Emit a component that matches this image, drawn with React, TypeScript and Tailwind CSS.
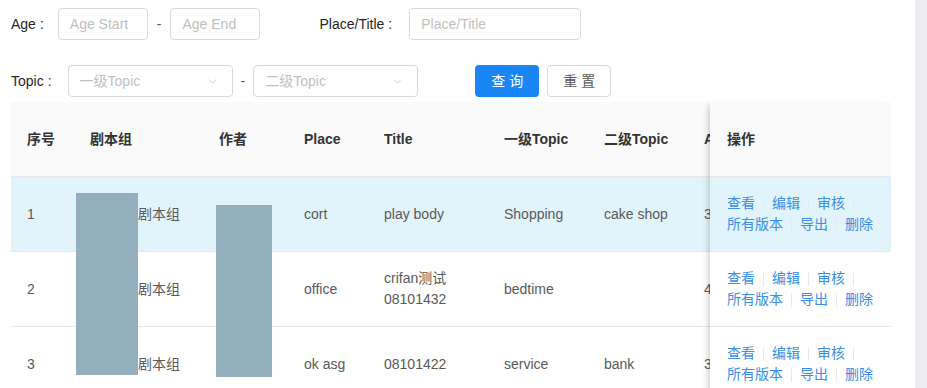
import { ChevronDown } from "lucide-react";

const FONT = { fontFamily: '"Liberation Sans", "Noto Sans CJK SC", sans-serif' };

const cols = [
  { key: "idx", title: "序号", w: "w-[63px]" },
  { key: "group", title: "剧本组", w: "w-[129px]" },
  { key: "author", title: "作者", w: "w-[85px]" },
  { key: "place", title: "Place", w: "w-[80px]" },
  { key: "title", title: "Title", w: "w-[120px]" },
  { key: "t1", title: "一级Topic", w: "w-[100px]" },
  { key: "t2", title: "二级Topic", w: "w-[100px]" },
  { key: "age", title: "Age", w: "w-[100px]" },
];

type Row = { idx: string; group: string; author: string; place: string; title: string[]; t1: string; t2: string; age: string };

const rows: Row[] = [
  { idx: "1", group: "剧本组", author: "", place: "cort", title: ["play body"], t1: "Shopping", t2: "cake shop", age: "3" },
  { idx: "2", group: "剧本组", author: "", place: "office", title: ["crifan测试", "08101432"], t1: "bedtime", t2: "", age: "4" },
  { idx: "3", group: "剧本组", author: "", place: "ok asg", title: ["08101422"], t1: "service", t2: "bank", age: "3" },
];

function Divider() {
  return <span className="mx-[8px] inline-block h-[13px] w-px bg-[#e8e8e8] align-middle" />;
}

function Label({ text }: { text: string }) {
  return (
    <span className="text-[14px] text-[#262626]">
      {text}
      <span className="ml-[4px]">:</span>
    </span>
  );
}

function Input({ placeholder, w }: { placeholder: string; w: string }) {
  return (
    <div className={`${w} flex h-[32px] items-center rounded-[4px] border border-[#d9d9d9] bg-white px-[11px] text-[14px] text-[#bfbfbf]`}>
      {placeholder}
    </div>
  );
}

function Select({ placeholder }: { placeholder: string }) {
  return (
    <div className="flex h-[32px] w-[165px] items-center justify-between rounded-[4px] border border-[#d9d9d9] bg-white pl-[11px] pr-[13px] text-[14px] text-[#bfbfbf]">
      <span>{placeholder}</span>
      <ChevronDown size={13} strokeWidth={1.5} className="text-[#bfbfbf]" />
    </div>
  );
}

function Actions() {
  return (
    <div className="text-[14px] leading-[21px] text-[#3a8ee6]">
      <div>
        查看<Divider />编辑<Divider />审核<Divider />
      </div>
      <div>
        所有版本<Divider />导出<Divider />删除
      </div>
    </div>
  );
}

export default function App() {
  return (
    <div className="relative flex min-h-[388px] bg-white" style={FONT}>
      <div className="flex-1 pl-[11px]">
        {/* search form */}
        <div className="mt-[8px] flex h-[32px] items-center">
          <Label text="Age" />
          <div className="ml-[14px]"><Input placeholder="Age Start" w="w-[90px]" /></div>
          <span className="mx-[9px] text-[14px] text-[#595959]">-</span>
          <Input placeholder="Age End" w="w-[90px]" />
          <div className="ml-[59px]"><Label text="Place/Title" /></div>
          <div className="ml-[17px]"><Input placeholder="Place/Title" w="w-[172px]" /></div>
        </div>
        <div className="mt-[25px] flex h-[32px] items-center">
          <Label text="Topic" />
          <div className="ml-[16px]"><Select placeholder="一级Topic" /></div>
          <span className="mx-[8px] text-[14px] text-[#595959]">-</span>
          <Select placeholder="二级Topic" />
          <button className="ml-[57px] h-[32px] w-[64px] rounded-[4px] bg-[#1a86f5] text-[14px] text-white">查 询</button>
          <button className="ml-[8px] h-[32px] w-[64px] rounded-[4px] border border-[#d9d9d9] bg-white text-[14px] text-[#595959]">重 置</button>
        </div>

        {/* table */}
        <div className="relative mt-[5px] flex w-[880px] text-[14px]">
          <div className="w-[699px] overflow-hidden">
            <div className="w-[900px]">
              <div className="flex h-[75px] items-center border-b border-[#e8e8e8] bg-[#fafafa] font-bold text-[#333]">
                {cols.map((c) => (
                  <div key={c.key} className={`${c.w} shrink-0 px-[16px]`}>{c.title}</div>
                ))}
              </div>
              {rows.map((r, i) => (
                <div
                  key={r.idx}
                  className={`flex h-[75px] items-center border-b text-[#595959] ${i === 0 ? "border-[#d5ebf5] bg-[#e1f4fc]" : "border-[#e8e8e8] bg-white"}`}
                >
                  <div className="w-[63px] shrink-0 px-[16px]">{r.idx}</div>
                  <div className="w-[129px] shrink-0 pl-[64px]">{r.group}</div>
                  <div className="w-[85px] shrink-0 px-[16px]">{r.author}</div>
                  <div className="w-[80px] shrink-0 px-[16px]">{r.place}</div>
                  <div className="w-[120px] shrink-0 px-[16px] leading-[21px]">
                    {r.title.map((t) => <div key={t}>{t}</div>)}
                  </div>
                  <div className="w-[100px] shrink-0 px-[16px]">{r.t1}</div>
                  <div className="w-[100px] shrink-0 px-[16px]">{r.t2}</div>
                  <div className="w-[100px] shrink-0 px-[16px]">{r.age}</div>
                </div>
              ))}
            </div>
          </div>
          {/* fixed right column */}
          <div className="relative z-10 w-[181px] shadow-[-5px_0_6px_-3px_rgba(0,0,0,0.18)]">
            <div className="flex h-[75px] items-center border-b border-[#e8e8e8] bg-[#fafafa] px-[17px] font-bold text-[#333]">操作</div>
            {rows.map((r, i) => (
              <div
                key={r.idx}
                className={`flex h-[75px] items-center border-b px-[17px] ${i === 0 ? "border-[#d5ebf5] bg-[#e1f4fc]" : "border-[#e8e8e8] bg-white"}`}
              >
                <Actions />
              </div>
            ))}
          </div>

          {/* redacted image blocks */}
          <div className="absolute left-[65px] top-[91px] h-[182px] w-[62px] bg-[#93aebc]" />
          <div className="absolute left-[205px] top-[103px] h-[172px] w-[56px] bg-[#93aebc]" />
        </div>
      </div>
      <div className="w-[12px] shrink-0 bg-[#ebedf1]" />
    </div>
  );
}
